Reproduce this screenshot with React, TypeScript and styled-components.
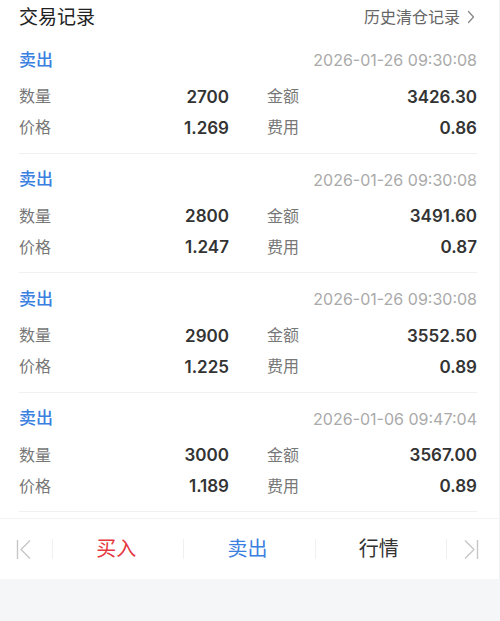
import React from "react";
import styled, { createGlobalStyle } from "styled-components";

const GlobalStyle = createGlobalStyle`
  html, body {
    margin: 0;
    padding: 0;
    background: #f5f6f8;
  }
  body {
    font-family: Inter, "Noto Sans CJK SC", sans-serif;
  }
`;

const Page = styled.div`
  width: 500px;
  display: flex;
  flex-direction: column;
`;

const Panel = styled.div`
  background: #ffffff;
  border-right: 1px solid #f1f1f3;
  box-sizing: border-box;
  display: flex;
  flex-direction: column;
`;

const Header = styled.div`
  height: 34px;
  padding: 0 24px 0 19px;
  display: flex;
  align-items: center;
  justify-content: space-between;
`;

const Title = styled.div`
  font-size: 19px;
  color: #222;
  line-height: 1;
`;

const HistoryLink = styled.div`
  display: flex;
  align-items: center;
  gap: 7px;
  font-size: 16px;
  color: #666;
  line-height: 1;
`;

const List = styled.div`
  display: flex;
  flex-direction: column;
  padding-bottom: 6px;
`;

const Card = styled.div`
  margin: 0 22px 0 19px;
  padding-bottom: 13.5px;
  border-bottom: 1px solid #f1f1f1;
  display: flex;
  flex-direction: column;
`;

const TypeRow = styled.div`
  height: 52px;
  display: flex;
  align-items: center;
  justify-content: space-between;
`;

const TypeText = styled.span<{ $color: string }>`
  font-size: 17px;
  font-weight: 500;
  color: ${(p) => p.$color};
  line-height: 1;
`;

const Time = styled.span`
  font-size: 16px;
  color: #aaaaaa;
  line-height: 1;
`;

const Grid = styled.div`
  display: grid;
  grid-template-columns: 1fr 1fr;
  column-gap: 38px;
  row-gap: 9px;
`;

const Cell = styled.div`
  height: 22px;
  display: flex;
  align-items: center;
  justify-content: space-between;
`;

const Label = styled.span`
  font-size: 16px;
  color: #777;
  line-height: 1;
  margin-top: -2px;
`;

const Value = styled.span`
  font-size: 17px;
  font-weight: 600;
  color: #333;
  line-height: 1;
`;

const Toolbar = styled.div`
  height: 60px;
  border-top: 1px solid #f3f3f4;
  display: flex;
  align-items: center;
`;

const EdgeButton = styled.div<{ $align: "left" | "right" }>`
  width: 52px;
  height: 100%;
  display: flex;
  align-items: center;
  justify-content: ${(p) => (p.$align === "left" ? "flex-start" : "flex-end")};
  padding: ${(p) => (p.$align === "left" ? "0 0 0 16px" : "0 20px 0 0")};
  box-sizing: border-box;
`;

const Divider = styled.div`
  width: 1px;
  height: 20px;
  background: #f0f0f0;
`;

const Action = styled.div<{ $color: string }>`
  flex: 1;
  text-align: center;
  font-size: 20px;
  color: ${(p) => p.$color};
  line-height: 1;
  padding-right: 4px;
`;

const BLUE = "#3b7fe0";
const RED = "#e5383f";

type Trade = {
  time: string;
  qty: string;
  amount: string;
  price: string;
  fee: string;
};

const trades: Trade[] = [
  { time: "2026-01-26 09:30:08", qty: "2700", amount: "3426.30", price: "1.269", fee: "0.86" },
  { time: "2026-01-26 09:30:08", qty: "2800", amount: "3491.60", price: "1.247", fee: "0.87" },
  { time: "2026-01-26 09:30:08", qty: "2900", amount: "3552.50", price: "1.225", fee: "0.89" },
  { time: "2026-01-06 09:47:04", qty: "3000", amount: "3567.00", price: "1.189", fee: "0.89" },
];

const Chevron = () => (
  <svg width="8" height="14" viewBox="0 0 8 14" fill="none">
    <polyline points="1.5,1.5 6.5,7 1.5,12.5" stroke="#888" strokeWidth="1.3" strokeLinecap="round" strokeLinejoin="round" />
  </svg>
);

const FirstIcon = () => (
  <svg width="16" height="21" viewBox="0 0 16 21" fill="none">
    <line x1="1.5" y1="1" x2="1.5" y2="20" stroke="#c6c6c6" strokeWidth="1.4" />
    <polyline points="14,1.5 5,10.5 14,19.5" stroke="#c6c6c6" strokeWidth="1.4" strokeLinejoin="round" />
  </svg>
);

const LastIcon = () => (
  <svg width="16" height="21" viewBox="0 0 16 21" fill="none">
    <line x1="14.5" y1="1" x2="14.5" y2="20" stroke="#c6c6c6" strokeWidth="1.4" />
    <polyline points="2,1.5 11,10.5 2,19.5" stroke="#c6c6c6" strokeWidth="1.4" strokeLinejoin="round" />
  </svg>
);

export default function App() {
  return (
    <>
      <GlobalStyle />
      <Page>
        <Panel>
          <Header>
            <Title>交易记录</Title>
            <HistoryLink>
              历史清仓记录
              <Chevron />
            </HistoryLink>
          </Header>
          <List>
            {trades.map((t, i) => (
              <Card key={i}>
                <TypeRow>
                  <TypeText $color={BLUE}>卖出</TypeText>
                  <Time>{t.time}</Time>
                </TypeRow>
                <Grid>
                  <Cell>
                    <Label>数量</Label>
                    <Value>{t.qty}</Value>
                  </Cell>
                  <Cell>
                    <Label>金额</Label>
                    <Value>{t.amount}</Value>
                  </Cell>
                  <Cell>
                    <Label>价格</Label>
                    <Value>{t.price}</Value>
                  </Cell>
                  <Cell>
                    <Label>费用</Label>
                    <Value>{t.fee}</Value>
                  </Cell>
                </Grid>
              </Card>
            ))}
          </List>
          <Toolbar>
            <EdgeButton $align="left">
              <FirstIcon />
            </EdgeButton>
            <Divider />
            <Action $color={RED}>买入</Action>
            <Divider />
            <Action $color={BLUE}>卖出</Action>
            <Divider />
            <Action $color="#333">行情</Action>
            <Divider />
            <EdgeButton $align="right">
              <LastIcon />
            </EdgeButton>
          </Toolbar>
        </Panel>
      </Page>
    </>
  );
}
